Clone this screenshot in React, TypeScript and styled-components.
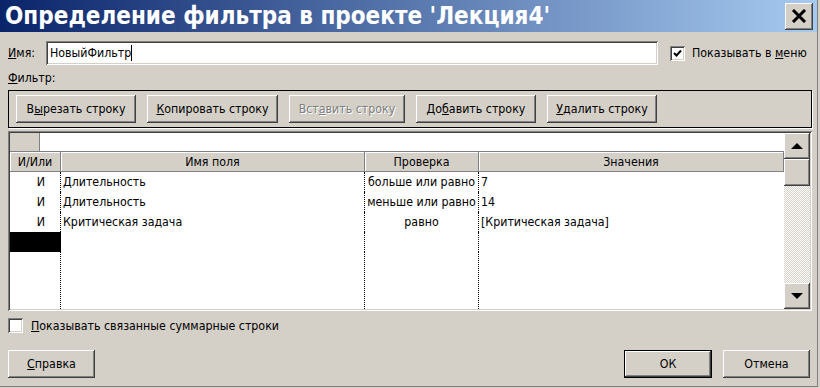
import React from "react";
import styled, { createGlobalStyle, css } from "styled-components";

const GlobalStyle = createGlobalStyle`
  html, body {
    margin: 0;
    padding: 0;
    background: #d4d0c8;
  }
  * {
    box-sizing: border-box;
  }
`;

const FACE = "#d4d0c8";
const SHADOW = "#808080";
const DARK = "#404040";
const FONT = `"DejaVu Sans Condensed", "DejaVu Sans", "Liberation Sans", sans-serif`;

const raised = css`
  background: ${FACE};
  box-shadow: inset -1px -1px 0 ${DARK}, inset 1px 1px 0 #fff,
    inset -2px -2px 0 ${SHADOW};
`;

const sunken = css`
  box-shadow: inset 1px 1px 0 ${SHADOW}, inset -1px -1px 0 #fff,
    inset 2px 2px 0 ${DARK}, inset -2px -2px 0 ${FACE};
`;

const Window = styled.div`
  width: 818px;
  height: 387px;
  background: ${FACE};
  border-right: 1px solid ${SHADOW};
  border-bottom: 1px solid ${SHADOW};
  font-family: ${FONT};
  font-size: 12.3px;
  color: #000;
  display: flex;
  flex-direction: column;
`;

const TitleBar = styled.div`
  height: 32px;
  display: flex;
  align-items: center;
  justify-content: space-between;
  padding: 0 4px 0 5px;
  background: linear-gradient(to right, #0a246a, #a6caf0);
`;

const Title = styled.div`
  color: #fff;
  font-family: ${FONT};
  font-weight: bold;
  font-size: 24px;
  white-space: nowrap;
`;

const CloseButton = styled.div`
  ${raised};
  width: 28px;
  height: 27px;
  display: flex;
  align-items: center;
  justify-content: center;
`;

const Content = styled.div`
  flex: 1;
  display: flex;
  flex-direction: column;
  padding: 0 6px 0 8px;
`;

const NameRow = styled.div`
  margin-top: 9px;
  height: 24px;
  display: flex;
  align-items: center;
`;

const NameLabel = styled.span`
  width: 38px;
`;

const TextInput = styled.div`
  ${sunken};
  background: #fff;
  width: 612px;
  height: 24px;
  padding: 0 4px;
  display: flex;
  align-items: center;
`;

const Caret = styled.span`
  display: inline-block;
  width: 1px;
  height: 16px;
  background: #000;
`;

const CheckRow = styled.label<{ $gap?: number; $offset?: number }>`
  display: flex;
  align-items: center;
  gap: ${({ $gap }) => $gap ?? 8}px;
  margin-left: ${({ $offset }) => $offset ?? 0}px;
  white-space: nowrap;
`;

const Box = styled.span`
  ${sunken};
  background: #fff;
  width: 15px;
  height: 15px;
  display: flex;
  align-items: center;
  justify-content: center;
`;

const FilterLabel = styled.div`
  margin-top: 6px;
  height: 14px;
  line-height: 14px;
`;

const Toolbar = styled.div`
  margin-top: 5px;
  height: 38px;
  width: 804px;
  border: 1px solid #000;
  box-shadow: 1px 1px 0 #fff;
  display: flex;
  align-items: center;
  padding-left: 7px;
`;

const Button = styled.div<{ $w: number; $disabled?: boolean; $default?: boolean }>`
  ${raised};
  width: ${({ $w }) => $w}px;
  height: 28px;
  display: flex;
  align-items: center;
  justify-content: center;
  white-space: nowrap;
  ${({ $disabled }) =>
    $disabled &&
    css`
      color: ${SHADOW};
      text-shadow: 1px 1px 0 #fff;
    `}
  ${({ $default }) =>
    $default &&
    css`
      box-shadow: inset 0 0 0 1px #000, inset -2px -2px 0 ${DARK},
        inset 2px 2px 0 #fff, inset -3px -3px 0 ${SHADOW};
    `}
`;

const ToolButtons = styled.div`
  display: flex;
  gap: 11px;
`;

const Grid = styled.div`
  ${sunken};
  margin-top: 3px;
  width: 804px;
  height: 180px;
  padding: 2px;
  display: flex;
`;

const Table = styled.div`
  flex: 1;
  display: flex;
  flex-direction: column;
  background: #fff;
`;

const EditStrip = styled.div`
  height: 18px;
  display: flex;
`;

const Corner = styled.div`
  width: 30px;
  background: ${FACE};
  border-right: 1px solid ${SHADOW};
`;

const cols = "51px 304px 114px 1fr";

const HeaderRow = styled.div`
  display: grid;
  grid-template-columns: ${cols};
  height: 21px;
  background: ${FACE};
  border-top: 1px solid ${SHADOW};
`;

const HeaderCell = styled.div`
  display: flex;
  align-items: center;
  justify-content: center;
  border-right: 1px solid ${SHADOW};
  border-bottom: 1px solid ${SHADOW};
  box-shadow: inset 1px 1px 0 #fff;
`;

const Body = styled.div`
  flex: 1;
  display: flex;
  flex-direction: column;
`;

const Row = styled.div<{ $fill?: boolean }>`
  display: grid;
  grid-template-columns: ${cols};
  height: ${({ $fill }) => ($fill ? "auto" : "20px")};
  flex: ${({ $fill }) => ($fill ? 1 : "none")};
`;

const Cell = styled.div<{ $align?: string; $last?: boolean; $black?: boolean }>`
  display: flex;
  align-items: center;
  justify-content: ${({ $align }) => $align ?? "flex-start"};
  padding: 0 2px;
  white-space: nowrap;
  overflow: hidden;
  border-right: ${({ $last }) => ($last ? "none" : "1px dotted #000")};
  background: ${({ $black }) => ($black ? "#000" : "transparent")};
`;

const AndCell = styled(Cell)`
  padding-right: 15px;
`;

const ScrollBar = styled.div`
  width: 26px;
  display: flex;
  flex-direction: column;
`;

const ScrollButton = styled.div<{ $h: number }>`
  ${raised};
  height: ${({ $h }) => $h}px;
  display: flex;
  align-items: center;
  justify-content: center;
`;

const Track = styled.div`
  flex: 1;
  background-color: #fff;
  background-image: repeating-conic-gradient(${FACE} 0 25%, #fff 0 50%);
  background-size: 2px 2px;
`;

const SummaryRow = styled.div`
  margin-top: 7px;
  height: 15px;
  display: flex;
`;

const Footer = styled.div`
  margin-top: 17px;
  width: 802px;
  display: flex;
  align-items: center;
`;

const Spacer = styled.div`
  flex: 1;
`;

const FooterButtons = styled.div`
  display: flex;
  gap: 11px;
`;

const Triangle = ({ down }: { down?: boolean }) => (
  <svg width="12" height="7" viewBox="0 0 12 7">
    <polygon points={down ? "0,0 12,0 6,6" : "6,0 12,6 0,6"} fill="#000" />
  </svg>
);

const rows = [
  { op: "И", field: "Длительность", test: "больше или равно", value: "7" },
  { op: "И", field: "Длительность", test: "меньше или равно", value: "14" },
  { op: "И", field: "Критическая задача", test: "равно", value: "[Критическая задача]" },
];

const App = () => {
  return (
    <>
      <GlobalStyle />
      <Window>
        <TitleBar>
          <Title>Определение фильтра в проекте 'Лекция4'</Title>
          <CloseButton>
            <svg width="16" height="14" viewBox="0 0 16 14">
              <path d="M2 1 L14 13 M14 1 L2 13" stroke="#000" strokeWidth="3" />
            </svg>
          </CloseButton>
        </TitleBar>
        <Content>
          <NameRow>
            <NameLabel>
              <u>И</u>мя:
            </NameLabel>
            <TextInput>
              НовыйФильтр
              <Caret />
            </TextInput>
            <CheckRow $gap={7} $offset={12}>
              <Box>
                <svg width="9" height="9" viewBox="0 0 9 9">
                  <path d="M1 4 L3.5 6.5 L8 1.5" stroke="#000" strokeWidth="2" fill="none" />
                </svg>
              </Box>
              <span>
                Показывать в <u>м</u>еню
              </span>
            </CheckRow>
          </NameRow>
          <FilterLabel>
            <u>Ф</u>ильтр:
          </FilterLabel>
          <Toolbar>
            <ToolButtons>
              <Button $w={120}>
                В<u>ы</u>резать строку
              </Button>
              <Button $w={131}>
                <u>К</u>опировать строку
              </Button>
              <Button $w={116} $disabled>
                Вст<u>а</u>вить строку
              </Button>
              <Button $w={120}>
                До<u>б</u>авить строку
              </Button>
              <Button $w={110}>
                <u>У</u>далить строку
              </Button>
            </ToolButtons>
          </Toolbar>
          <Grid>
            <Table>
              <EditStrip>
                <Corner />
              </EditStrip>
              <HeaderRow>
                <HeaderCell>И/Или</HeaderCell>
                <HeaderCell>Имя поля</HeaderCell>
                <HeaderCell>Проверка</HeaderCell>
                <HeaderCell>Значения</HeaderCell>
              </HeaderRow>
              <Body>
                {rows.map((r, i) => (
                  <Row key={i}>
                    <AndCell $align="flex-end">{r.op}</AndCell>
                    <Cell>{r.field}</Cell>
                    <Cell $align="center">{r.test}</Cell>
                    <Cell $last>{r.value}</Cell>
                  </Row>
                ))}
                <Row>
                  <Cell $black />
                  <Cell />
                  <Cell />
                  <Cell $last />
                </Row>
                <Row $fill>
                  <Cell />
                  <Cell />
                  <Cell />
                  <Cell $last />
                </Row>
              </Body>
            </Table>
            <ScrollBar>
              <ScrollButton $h={26}>
                <Triangle />
              </ScrollButton>
              <ScrollButton $h={27} />
              <Track />
              <ScrollButton $h={26}>
                <Triangle down />
              </ScrollButton>
            </ScrollBar>
          </Grid>
          <SummaryRow>
            <CheckRow>
              <Box />
              <span>
                <u>П</u>оказывать связанные суммарные строки
              </span>
            </CheckRow>
          </SummaryRow>
          <Footer>
            <Button $w={87}>
              <u>С</u>правка
            </Button>
            <Spacer />
            <FooterButtons>
              <Button $w={88} $default>
                ОК
              </Button>
              <Button $w={87}>Отмена</Button>
            </FooterButtons>
          </Footer>
        </Content>
      </Window>
    </>
  );
};

export default App;
